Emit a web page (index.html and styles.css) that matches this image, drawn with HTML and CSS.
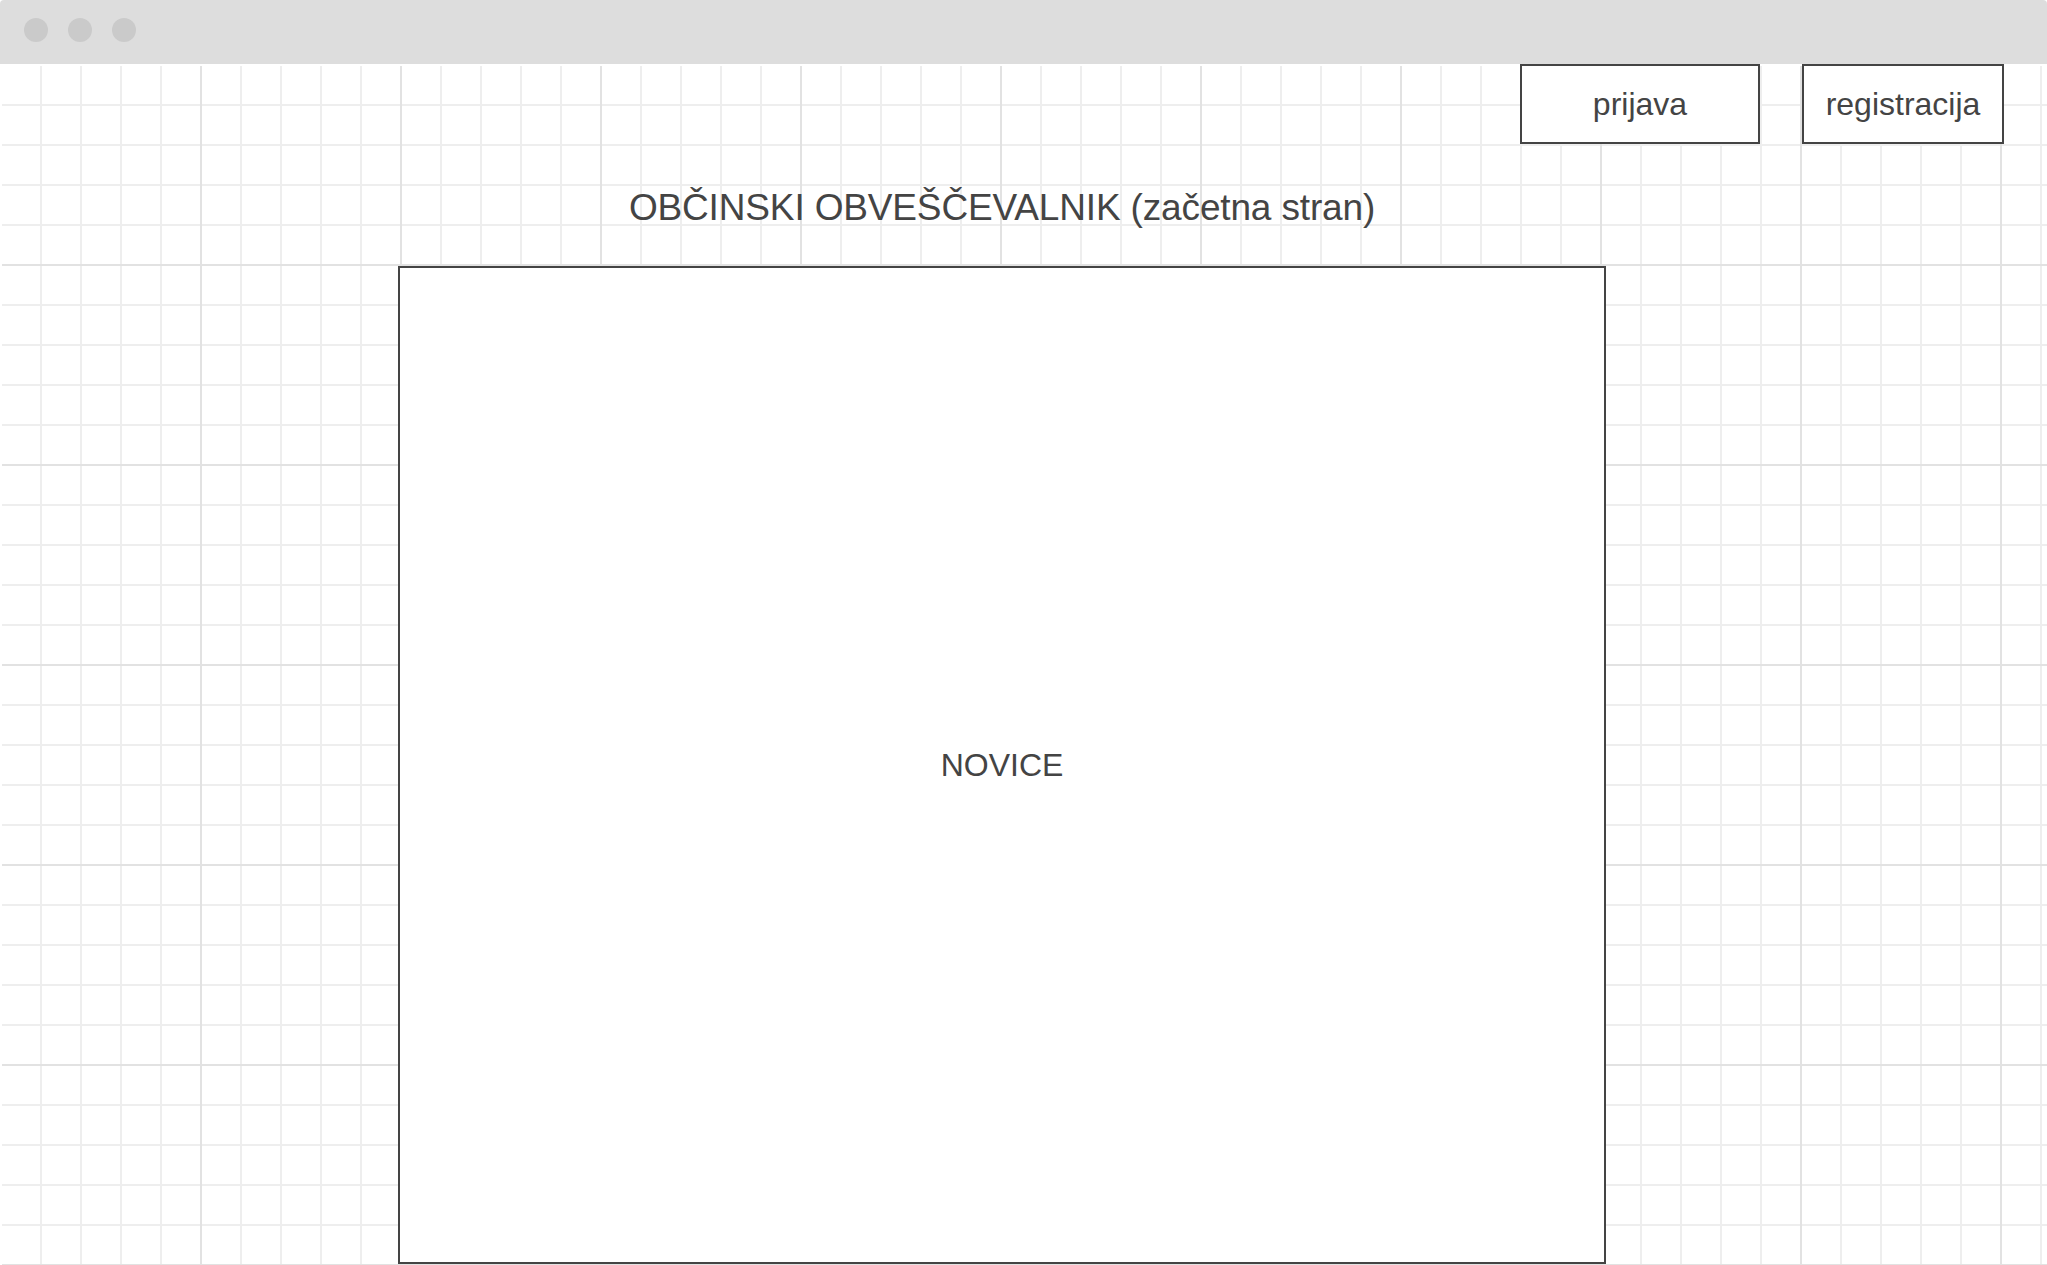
FILE: index.html
```html
<!DOCTYPE html>
<html lang="sl">
<head>
<meta charset="utf-8">
<title>Občinski obveščevalnik</title>
<link rel="stylesheet" href="styles.css">
</head>
<body>
<div class="window">
  <div class="titlebar">
    <span class="dot"></span>
    <span class="dot"></span>
    <span class="dot"></span>
  </div>
  <div class="canvas">
    <div class="topbar">
      <div class="btn btn-login">prijava</div>
      <div class="btn btn-register">registracija</div>
    </div>
    <div class="column">
      <div class="heading">OBČINSKI OBVEŠČEVALNIK (začetna stran)</div>
      <div class="news">NOVICE</div>
    </div>
  </div>
</div>
</body>
</html>
```

FILE: styles.css
```css
html, body {
  margin: 0;
  padding: 0;
  background: #ffffff;
}

body {
  font-family: "Liberation Sans", Arial, sans-serif;
  color: #444444;
  overflow: hidden;
}

.window {
  width: 2047px;
  height: 1265px;
  display: flex;
  flex-direction: column;
}

.titlebar {
  height: 64px;
  flex: 0 0 64px;
  background: #dddddd;
  border-top-left-radius: 4px;
  border-top-right-radius: 4px;
  display: flex;
  align-items: center;
  gap: 20px;
  padding-left: 24px;
  padding-bottom: 4px;
  box-sizing: border-box;
}

.dot {
  width: 24px;
  height: 24px;
  border-radius: 50%;
  background: #cacaca;
}

.canvas {
  flex: 1 1 auto;
  padding: 2px 0 0 2px;
  box-sizing: border-box;
  background-color: #ffffff;
  background-origin: content-box;
  background-clip: content-box;
  background-image:
    linear-gradient(to right, transparent 198px, #e2e2e2 198px, #e2e2e2 200px),
    linear-gradient(to bottom, transparent 198px, #e2e2e2 198px, #e2e2e2 200px),
    linear-gradient(to right, transparent 38px, #eeeeee 38px, #eeeeee 40px),
    linear-gradient(to bottom, transparent 38px, #eeeeee 38px, #eeeeee 40px);
  background-size: 200px 200px, 200px 200px, 40px 40px, 40px 40px;
  display: flex;
  flex-direction: column;
}

.topbar {
  margin-top: -2px;
  display: flex;
  justify-content: flex-end;
  gap: 42px;
  padding-right: 43px;
}

.btn {
  height: 80px;
  box-sizing: border-box;
  border: 2px solid #444444;
  background: #ffffff;
  display: flex;
  align-items: center;
  justify-content: center;
  font-size: 32px;
  color: #444444;
}

.btn-login {
  width: 240px;
}

.btn-register {
  width: 202px;
}

.column {
  margin-left: 396px;
  width: 1208px;
  display: flex;
  flex-direction: column;
}

.heading {
  height: 122px;
  display: flex;
  align-items: center;
  justify-content: center;
  font-size: 37px;
  letter-spacing: -0.15px;
  color: #444444;
  padding-top: 6px;
  box-sizing: border-box;
}

.news {
  height: 998px;
  box-sizing: border-box;
  border: 2px solid #444444;
  background: #ffffff;
  display: flex;
  align-items: center;
  justify-content: center;
  font-size: 32px;
  color: #444444;
}
```
